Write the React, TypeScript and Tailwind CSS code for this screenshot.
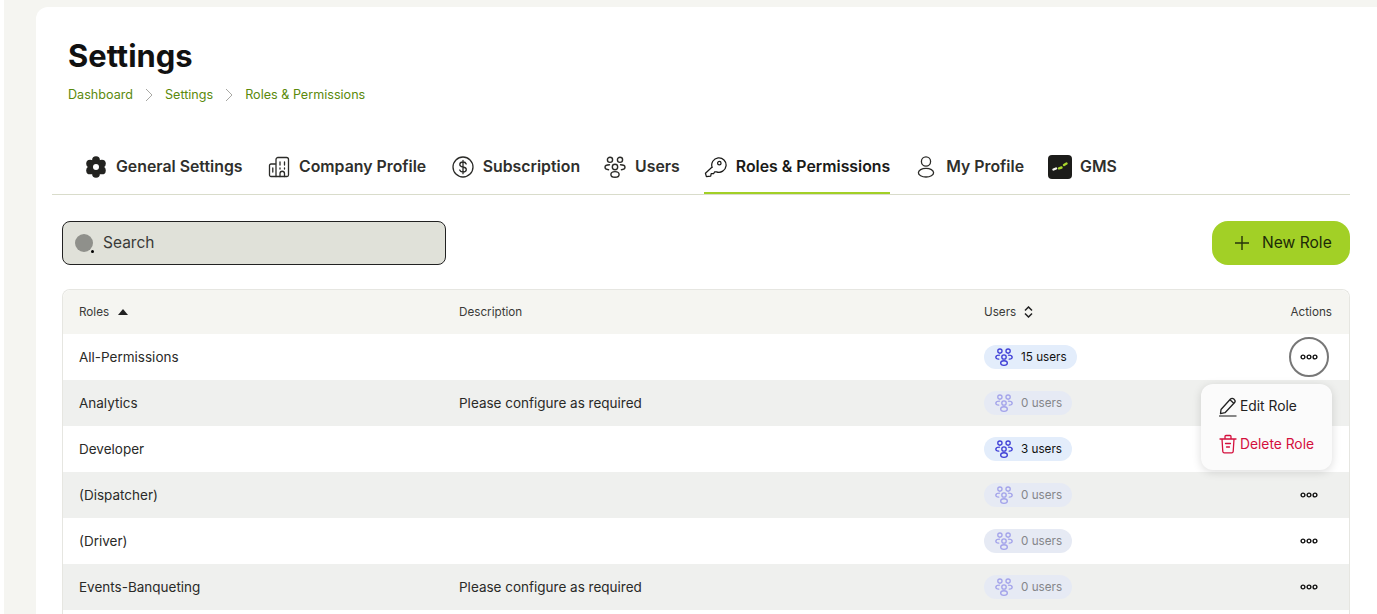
import React from "react";

const font = { fontFamily: "Inter, 'Liberation Sans', sans-serif" };

function Gear() {
  const lobes = [0, 60, 120, 180, 240, 300].map((a) => {
    const r = (a * Math.PI) / 180;
    return { x: 11 + 6.8 * Math.sin(r), y: 11 - 6.8 * Math.cos(r) };
  });
  return (
    <svg width="22" height="22" viewBox="0 0 22 22">
      {lobes.map((p, i) => (
        <circle key={i} cx={p.x} cy={p.y} r="3.900" fill="#232320" />
      ))}
      <circle cx="11" cy="11" r="7" fill="#232320" />
      <circle cx="11" cy="11" r="3" fill="#fff" />
    </svg>
  );
}
function Building() {
  return (
    <svg width="22" height="22" viewBox="0 0 22 22" fill="none" stroke="#2b2b28" strokeWidth="1.300" strokeLinecap="round" strokeLinejoin="round">
      <path d="M8 20.500H3a1.500 1.500 0 0 1-1.500-1.500V9.500A1.500 1.500 0 0 1 3 8h4.500" />
      <path d="M8 20.500V3.500A2 2 0 0 1 10 1.500h8.500a2 2 0 0 1 2 2V19a1.500 1.500 0 0 1-1.500 1.500H8Z" />
      <path d="M4.800 12v4M12 6v3M16.500 6v3M12 12v1M16.500 12v1M12 20.500v-3a2 2 0 0 1 4.500 0v3" />
    </svg>
  );
}
function Dollar() {
  return (
    <svg width="22" height="22" viewBox="0 0 22 22" fill="none" stroke="#2b2b28" strokeWidth="1.300" strokeLinecap="round">
      <circle cx="11" cy="11" r="10" />
      <path d="M14.200 8c-.4-1.300-1.700-2-3.200-2-1.800 0-3.200 1-3.200 2.500S9.200 10.700 11 11c1.800.3 3.300 1 3.300 2.500S12.800 16 11 16c-1.600 0-2.900-.7-3.300-2M11 4.300v13.400" />
    </svg>
  );
}
function UsersIcon({ color = "#2b2b28", size = 22, sw = 1.4 }: { color?: string; size?: number; sw?: number }) {
  return (
    <svg width={size} height={size} viewBox="0 0 22 22" fill="none" stroke={color} strokeWidth={sw} strokeLinecap="round">
      <circle cx="6" cy="3.800" r="2.600" />
      <circle cx="16" cy="3.800" r="2.600" />
      <circle cx="11" cy="11" r="2.700" />
      <path d="M5.500 8.800C2.800 8.800 1 10 1 11.300s1.300 2.200 3.600 2.400M16.500 8.800c2.700 0 4.500 1.200 4.500 2.500s-1.300 2.200-3.600 2.400" />
      <ellipse cx="11" cy="18.400" rx="4.100" ry="2.800" />
    </svg>
  );
}
function Key() {
  return (
    <svg width="23" height="22" viewBox="0 0 24 22" fill="none" stroke="#1a1a18" strokeWidth="1.300" strokeLinecap="round" strokeLinejoin="round">
      <path d="M8.500 11.500A7.500 7.500 0 1 1 13 16l-2 .2-1 1.800H7.500l-.5 2.500-4.500.5-1-3.500 7-6.500Z" />
      <circle cx="16" cy="7" r="1.800" />
    </svg>
  );
}
function Person() {
  return (
    <svg width="18" height="24" viewBox="0 0 18 24" fill="none" stroke="#2b2b28" strokeWidth="1.300">
      <circle cx="9" cy="6.500" r="4.600" />
      <ellipse cx="9" cy="17.700" rx="7.600" ry="4.300" />
    </svg>
  );
}
function GmsLogo() {
  return (
    <svg width="24" height="24" viewBox="0 0 24 24">
      <rect width="24" height="24" rx="4" fill="#1c1c1a" />
      <path d="M5.500 14.500l2.500-1" stroke="#f4f4ee" strokeWidth="2.400" strokeLinecap="round" fill="none" />
      <path d="M11 13.300l2.500-.8M16 10l2.500-1.500" stroke="#a9d62c" strokeWidth="2.400" strokeLinecap="round" fill="none" />
    </svg>
  );
}
function Chevron() {
  return (
    <svg width="8" height="14" viewBox="0 0 8 14" fill="none" stroke="#a8a8a4" strokeWidth="1">
      <path d="M1 1l6 6-6 6" />
    </svg>
  );
}

function Tab({ icon, label, active, gap = "gap-[9px]", cls = "" }: { icon: React.ReactNode; label: string; active?: boolean; gap?: string; cls?: string }) {
  return (
    <div className={`flex h-[55px] items-center pt-[3px] ${gap} ${cls} border-b-2 text-[15.850px] font-semibold ${active ? "border-[#a2d026] text-[#1a1a18]" : "border-transparent text-[#2f2f2c]"}`}>
      {icon}
      <span>{label}</span>
    </div>
  );
}

function Dots() {
  return (
    <svg width="18" height="6" viewBox="0 0 18 6" fill="none" stroke="#111" strokeWidth="1.400">
      <circle cx="3" cy="3" r="1.900" />
      <circle cx="9" cy="3" r="1.900" />
      <circle cx="15" cy="3" r="1.900" />
    </svg>
  );
}

function Badge({ n }: { n: number }) {
  const on = n > 0;
  return (
    <span className={`inline-flex h-6 items-center gap-[8px] rounded-full pl-[11px] pr-[10px] text-[11.700px] ${on ? "bg-[#e3edfb] text-[#111]" : "bg-[#e6eaf4] text-[#85868a]"}`}>
      <UsersIcon color={on ? "#3f3fd6" : "#a3a3ea"} size={18} sw={1.600} />
      <span className="pt-[1px]">{n} users</span>
    </span>
  );
}

const rows = [
  { name: "All-Permissions", desc: "", users: 15 },
  { name: "Analytics", desc: "Please configure as required", users: 0 },
  { name: "Developer", desc: "", users: 3 },
  { name: "(Dispatcher)", desc: "", users: 0 },
  { name: "(Driver)", desc: "", users: 0 },
  { name: "Events-Banqueting", desc: "Please configure as required", users: 0 },
  { name: "", desc: "", users: -1 },
];

export default function App() {
  return (
    <div style={font} className="flex h-[614px] w-[1377px] overflow-hidden bg-white text-[#222]">
      <div className="w-1 shrink-0 bg-white" />
      <div className="flex-1 bg-[#f5f5f1] pl-8 pt-[7px]">
        <div className="h-full rounded-tl-xl bg-white pl-4 pr-[27px]">
          <div className="pl-4 pt-[29px]">
            <h1 className="text-[30.900px] leading-[40px] font-bold text-[#111]">Settings</h1>
            <div className="mt-[9px] flex items-center gap-[12px] text-[12.600px] leading-5 text-[#5b8a0c]">
              <span>Dashboard</span>
              <Chevron />
              <span>Settings</span>
              <Chevron />
              <span>Roles &amp; Permissions</span>
            </div>
          </div>
          <div className="mt-[34px] flex h-[56px] gap-[25.500px] border-b border-[#d9dccb] pl-[33px] -mb-px">
            <Tab icon={<Gear />} label="General Settings" />
            <Tab icon={<Building />} label="Company Profile" />
            <Tab icon={<Dollar />} label="Subscription" />
            <Tab icon={<UsersIcon />} label="Users" cls="-ml-[1.500px]" />
            <Tab icon={<Key />} label="Roles & Permissions" active cls="-ml-[1.500px]" />
            <div className="ml-[1.500px] flex gap-[24px]">
              <Tab icon={<Person />} label="My Profile" gap="gap-[11px]" />
              <Tab icon={<GmsLogo />} label="GMS" gap="gap-[8px]" />
            </div>
          </div>
          <div className="ml-[10px] mt-[27px]">
            <div className="flex items-center justify-between">
              <div className="flex h-[44px] w-[384px] items-center gap-[10px] rounded-lg border border-[#222] bg-[#e0e1d9] pl-3 text-[15.500px] text-[#3a3a38]">
                <span className="relative h-[18px] w-[18px] rounded-full bg-[#8f908b]">
                  <span className="absolute -bottom-px -right-px h-[3px] w-[3px] rounded-full bg-black" />
                </span>
                Search
              </div>
              <div className="flex h-[44px] w-[138px] items-center gap-[13px] rounded-2xl bg-[#a2d026] pl-[23px] text-[15.600px] text-[#1d2a08]">
                <svg width="14" height="14" viewBox="0 0 14 14" stroke="#26330b" strokeWidth="1.400" fill="none">
                  <path d="M7 0v14M0 7h14" />
                </svg>
                New Role
              </div>
            </div>
            <div className="relative mt-6 rounded-t-lg border border-b-0 border-[#e6e6e1]">
              <div className="flex h-[44px] items-center rounded-t-lg bg-[#f5f5f1] pl-4 pr-[17px] pt-[1px] text-[11.700px] text-[#3a3a38]">
                <div className="flex w-[380px] items-center gap-[9px]">
                  Roles
                  <svg width="10" height="6" viewBox="0 0 10 6" fill="#222">
                    <path d="M5 0l5 6H0z" />
                  </svg>
                </div>
                <div className="w-[525px]">Description</div>
                <div className="flex flex-1 items-center gap-[8px]">
                  Users
                  <svg width="9" height="12" viewBox="0 0 9 12" fill="none" stroke="#222" strokeWidth="1.500">
                    <path d="M1 4.500l3.500-3.500 3.500 3.500M1 7.500l3.500 3.500 3.500-3.500" />
                  </svg>
                </div>
                <div>Actions</div>
              </div>
              {rows.map((r, i) => (
                <div key={i} className={`flex h-[46px] items-center px-4 text-[13.500px] text-[#2a2a28] ${i % 2 === 1 ? "bg-[#eff0ee]" : "bg-white"}`}>
                  <div className="w-[380px]">{r.name}</div>
                  <div className="w-[525px]">{r.desc}</div>
                  <div className="flex flex-1 items-center">{r.users >= 0 && <Badge n={r.users} />}</div>
                  {r.users >= 0 && (
                    i === 0 ? (
                      <div className="mr-[4px] flex h-[40px] w-[40px] items-center justify-center rounded-full border-2 border-[#777]">
                        <Dots />
                      </div>
                    ) : (
                      <div className="mr-[15px] flex"><Dots /></div>
                    )
                  )}
                </div>
              ))}
              <div className="absolute left-[1138px] top-[94px] h-[86px] w-[131px] rounded-xl bg-[#fbfbfb] pl-[18px] pt-[10px] text-[13.800px] shadow-[0_2px_10px_rgba(0,0,0,0.14)]">
                <div className="flex h-[24px] items-center gap-[3px] text-[#222]">
                  <svg width="18" height="21" viewBox="0 0 18 21" fill="none" stroke="#222" strokeWidth="1.300" strokeLinejoin="round">
                    <path d="M2 13.500L11.500 3a2.300 2.300 0 0 1 3.300 0l.6.600a2.300 2.300 0 0 1 0 3.200L6 16.700l-4.500 1 .5-4.200Z" />
                    <path d="M11 3.800l4 3.600" />
                    <path d="M0 20h17.500" stroke="#555" strokeWidth="1.400" />
                  </svg>
                  Edit Role
                </div>
                <div className="mt-[14px] flex h-[24px] items-center gap-[3px] text-[#d40f3d]">
                  <svg width="18" height="20" viewBox="0 0 18 20" fill="none" stroke="#d40f3d" strokeWidth="1.300" strokeLinecap="round" strokeLinejoin="round">
                    <path d="M1 5h16M6 4.500V2.500a1 1 0 0 1 1-1h4a1 1 0 0 1 1 1v2M3 5l.8 12.500a1.500 1.500 0 0 0 1.500 1.300h7.400a1.500 1.500 0 0 0 1.500-1.300L15 5M6.500 9.500h5M7.500 13h3" />
                  </svg>
                  Delete Role
                </div>
              </div>
            </div>
          </div>
        </div>
      </div>
    </div>
  );
}
